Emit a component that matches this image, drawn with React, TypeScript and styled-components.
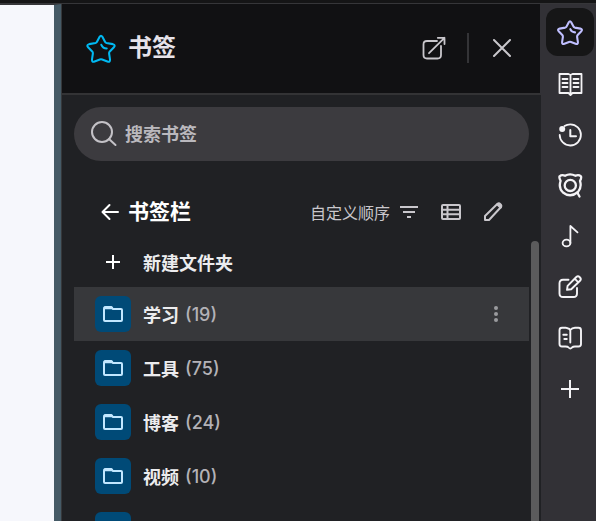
import React from 'react';
import styled, { createGlobalStyle } from 'styled-components';

const GlobalStyle = createGlobalStyle`
  *, *::before, *::after { box-sizing: border-box; }
  body {
    margin: 0;
    overflow: hidden;
    background: #202124;
    color: #ececee;
    font-family: Inter, "Noto Sans CJK SC", sans-serif;
    font-size: 18px;
  }
  button, input { font: inherit; color: inherit; }
`;

const Window = styled.div`
  display: flex;
  flex-direction: column;
  height: 100vh;
`;

const TopStrip = styled.div`
  flex: none;
  height: 4px;
  background: #151516;
  border-bottom: 1px solid #363639;
`;

const Main = styled.div`
  flex: 1;
  min-height: 0;
  display: flex;
`;

const PageEdge = styled.div`
  flex: none;
  width: 61px;
  background: #f6f7fc;
  border-top: 1px solid #363639;
  border-right: 7px solid #455a66;
`;

const Panel = styled.aside`
  flex: 1;
  min-width: 0;
  display: flex;
  flex-direction: column;
  background: #202124;
  border-left: 1px solid #36383b;
`;

const Header = styled.header`
  flex: none;
  display: flex;
  align-items: center;
  height: 91px;
  padding: 0 25px 2px 23px;
  background: #111113;
  border-bottom: 2px solid #333335;
  border-right: 1px solid #323136;
`;

const Title = styled.h1`
  flex: 1;
  margin: 0 0 0 11px;
  font-size: 24px;
  line-height: 32px;
  font-weight: 700;
  color: #e6e3ea;
`;

const Divider = styled.span`
  width: 2px;
  height: 30px;
  margin: 0 20px 0 19px;
  background: #343437;
`;

const IconButton = styled.button<{ $tone?: string }>`
  flex: none;
  display: flex;
  padding: 0;
  border: 0;
  background: none;
  color: ${(p) => p.$tone ?? '#c9c7cc'};
  cursor: pointer;
`;

const Badge = styled.span`
  flex: none;
  color: #00b9f2;
`;

const SearchBox = styled.label`
  flex: none;
  display: flex;
  align-items: center;
  gap: 7px;
  height: 54px;
  margin: 12px 12px 0;
  padding: 0 16px;
  border-radius: 27px;
  background: #3c3b3f;
  color: #c4c2c7;
`;

const SearchInput = styled.input`
  flex: 1;
  min-width: 0;
  padding: 0;
  border: 0;
  outline: 0;
  background: none;
  font-weight: 700;
  &::placeholder { color: #bab8bd; opacity: 1; }
`;

const FolderBar = styled.div`
  flex: none;
  display: flex;
  align-items: center;
  height: 50px;
  margin-top: 26px;
  padding: 0 36px 0 38px;
`;

const FolderTitle = styled.h2`
  flex: 1;
  margin: 0 0 0 8px;
  font-size: 21px;
  line-height: 30px;
  font-weight: 700;
  color: #fff;
`;

const SortButton = styled(IconButton)`
  align-items: center;
  gap: 7px;
  margin-right: 18px;
  font-size: 16px;
`;

const BarActions = styled.div`
  display: flex;
  gap: 18px;
`;

const ScrollArea = styled.div`
  flex: 1;
  min-height: 0;
  display: flex;
  gap: 2px;
  padding: 0 2px 0 12px;
`;

const List = styled.ul`
  flex: 1;
  min-width: 0;
  margin: 0;
  padding: 0;
  overflow: hidden;
  list-style: none;
`;

const Thumb = styled.div`
  width: 8px;
  margin-top: 4px;
  border-radius: 4px 4px 0 0;
  background: #5b5b5c;
`;

const Row = styled.li<{ $active?: boolean; $short?: boolean }>`
  display: flex;
  align-items: center;
  height: ${(p) => (p.$short ? 50 : 54)}px;
  padding: 0 21px;
  background: ${(p) => (p.$active ? '#37383b' : 'transparent')};
`;

const RowButton = styled.button`
  flex: 1;
  min-width: 0;
  display: flex;
  align-items: center;
  padding: 0;
  border: 0;
  background: none;
  text-align: left;
  font-weight: 700;
  cursor: pointer;
`;

const Tile = styled.span<{ $filled?: boolean }>`
  display: flex;
  align-items: center;
  justify-content: center;
  width: 36px;
  height: 36px;
  margin-right: 12px;
  border-radius: 6px;
  background: ${(p) => (p.$filled ? '#004a77' : 'transparent')};
  color: ${(p) => (p.$filled ? '#c2e7ff' : '#fff')};
`;

const Count = styled.span`
  margin-left: 6px;
  font-weight: 500;
  color: #b3b2b7;
`;

const Rail = styled.nav`
  flex: none;
  display: flex;
  flex-direction: column;
  gap: 3px;
  width: 55px;
  padding: 4px 2px 0 5px;
  background: #323136;
`;

const RailButton = styled.button<{ $active?: boolean }>`
  flex: none;
  display: flex;
  align-items: center;
  justify-content: center;
  height: 48px;
  padding: 0;
  border: 0;
  border-radius: 12px;
  background: ${(p) => (p.$active ? '#161617' : 'none')};
  color: ${(p) => (p.$active ? '#c0bfff' : '#f4f3f6')};
  cursor: pointer;
`;

const Svg = styled.svg`
  display: block;
  flex: none;
  fill: none;
  stroke: currentColor;
  stroke-linecap: round;
  stroke-linejoin: round;
`;

type IconProps = { size?: number; box?: number; weight?: number; children: React.ReactNode };

const Icon = ({ size = 28, box = size, weight = 2, children }: IconProps) => (
  <Svg width={size} height={size} viewBox={`0 0 ${box} ${box}`} strokeWidth={weight} aria-hidden="true">
    {children}
  </Svg>
);

const Star = ({ size = 28, weight = 2.1 }) => (
  <Icon size={size} box={28} weight={weight}>
    <path d="M12.8 4.2Q14 2.2 15.2 4.2L17.5 8.6Q17.9 9.4 18.8 9.6L24.3 10.6Q27 11.5 25.3 13.3L21.7 17Q21 17.8 21.1 18.8L21.9 24.2Q22 26.7 19.6 25.8L15 24Q14 23.6 13 24L8.4 25.8Q6 26.7 6.1 24.2L6.9 18.8Q7 17.8 6.3 17L2.7 13.3Q1 11.5 3.7 10.6L9.2 9.6Q10.1 9.4 10.5 8.6Z" />
    <path d="M14.3 11.2Q15.6 14.3 19 14.4" />
  </Icon>
);

const OpenIcon = () => (
  <Icon weight={1.8}>
    <path d="M17 7H7Q3.5 7 3.5 10.5V21Q3.5 24.5 7 24.5H17.5Q21 24.5 21 21V12" />
    <path d="M9 19.2L24.5 3.8M17.8 3.8H24.5V10" />
  </Icon>
);

const CloseIcon = () => (
  <Icon size={26}><path d="M5 5L21 21M21 5L5 21" /></Icon>
);

const SearchIcon = () => (
  <Icon><circle cx="12" cy="12" r="10" /><path d="M19 19L25.5 25" /></Icon>
);

const BackIcon = () => (
  <Icon size={20}><path d="M18 10H3M9.5 3L2.5 10L9.5 17" /></Icon>
);

const SortIcon = () => (
  <Icon size={24}><path strokeLinecap="butt" d="M3 7H21M6 12H18M10 17H14" /></Icon>
);

const TableIcon = () => (
  <Icon size={24}>
    <rect x="3" y="5" width="18" height="14" rx="1" />
    <path strokeLinecap="butt" d="M8.5 5V19M3 9.7H21M3 14.3H21" />
  </Icon>
);

const PencilIcon = () => (
  <Icon size={24}>
    <path d="M4 20V16L16.5 3.8Q18 2.8 19.4 4.2Q21 5.8 19.8 7.2L8 20Z" />
    <path d="M17 4.5L19.5 7" strokeWidth={3} />
  </Icon>
);

const PlusIcon = () => (
  <Icon size={20}><path strokeLinecap="butt" d="M10 3V17M3 10H17" /></Icon>
);

const FolderIcon = () => (
  <Icon size={24}>
    <path d="M3 7Q3 5 5 5H10L12 7H20Q21 7 21 8V18Q21 19 20 19H4Q3 19 3 18Z" />
    <path d="M4 5.8H10.5" strokeWidth={3} />
  </Icon>
);

const DotsIcon = () => (
  <Icon size={24}>
    <g fill="currentColor" stroke="none">
      <circle cx="12" cy="6" r="2" /><circle cx="12" cy="12" r="2" /><circle cx="12" cy="18" r="2" />
    </g>
  </Icon>
);

const ReadingIcon = () => (
  <Icon weight={1.8}>
    <path d="M14.5 6L12.5 5H3.5V24H12.5L14.5 26L16.5 24H25.5V5H16.5ZM14.5 6V25" />
    <path d="M6.5 10H11.5M6.5 14H11.5M6.5 18H11.5M17.5 10H22.5M17.5 14H22.5M17.5 18H22.5" />
  </Icon>
);

const HistoryIcon = () => (
  <Icon weight={1.8}>
    <path d="M8.5 6Q11 4.3 14.3 4.3A10.6 10.6 0 1 1 3.7 15" />
    <path d="M14.3 10V16.2H20" strokeWidth={2} />
    <circle cx="6.2" cy="9" r="3" fill="currentColor" stroke="none" />
  </Icon>
);

const MascotIcon = () => (
  <Icon weight={2.3}>
    <path d="M9 4.8Q14 1.8 19.5 4.8Q22.5 3.3 25 5.3Q25.6 7.3 24 9.8Q26 16.5 22 21Q14.4 27.3 7 21.5Q2.2 17 4.6 9.8Q3 7.3 3.5 5.3Q6 3.3 9 4.8Z" />
    <path d="M21.3 21.5L23.5 25.5" />
    <circle cx="14.3" cy="14.4" r="5.6" />
  </Icon>
);

const MusicIcon = () => (
  <Icon weight={1.8}>
    <ellipse cx="10.5" cy="21" rx="3.9" ry="3.4" />
    <path d="M14.4 21V4L21.5 10.3" />
  </Icon>
);

const ComposeIcon = () => (
  <Icon weight={1.9}>
    <path d="M12.5 6.8H7Q3.5 6.8 3.5 10.3V20.5Q3.5 24 7 24H17.5Q21 24 21 20.5V15" />
    <path d="M11 16.8L11.6 12.8L20.3 4Q22 2.5 23.8 4.2Q25.7 6 24 7.8L15.2 16.3ZM18.7 5.6L22.3 9.3" />
  </Icon>
);

const BookIcon = () => (
  <Icon weight={1.9}>
    <path d="M14.3 18.5V7Q14.3 5 12.3 4.5L9.5 3.7H6Q3.5 3.7 3.5 6.2V20Q3.5 22.5 6 22.5H9.5Q11.8 22.5 12.6 23.5Q14.3 25.5 16 23.5Q17 22.5 19 22.5H22.5Q25 22.5 25 20V6.2Q25 3.7 22.5 3.7H19Q16 3.7 14.3 6" />
    <path d="M7.3 10.8H10.8M8.3 15H10.8" />
  </Icon>
);

const AddIcon = () => (
  <Icon><path strokeLinecap="butt" d="M14 5V23M5 14H23" /></Icon>
);

const folders = [
  { name: '学习', count: 19, active: true },
  { name: '工具', count: 75 },
  { name: '博客', count: 24 },
  { name: '视频', count: 10 },
];

const railItems = [
  { label: '书签', icon: <Star />, active: true },
  { label: '阅读清单', icon: <ReadingIcon /> },
  { label: '历史记录', icon: <HistoryIcon /> },
  { label: '助手', icon: <MascotIcon /> },
  { label: '音乐', icon: <MusicIcon /> },
  { label: '笔记', icon: <ComposeIcon /> },
  { label: '图书', icon: <BookIcon /> },
  { label: '添加', icon: <AddIcon /> },
];

export default function App() {
  return (
    <Window>
      <GlobalStyle />
      <TopStrip />
      <Main>
        <PageEdge />
        <Panel>
          <Header>
            <Badge><Star size={32} weight={1.8} /></Badge>
            <Title>书签</Title>
            <IconButton aria-label="在标签页中打开"><OpenIcon /></IconButton>
            <Divider />
            <IconButton aria-label="关闭"><CloseIcon /></IconButton>
          </Header>
          <SearchBox>
            <SearchIcon />
            <SearchInput type="text" placeholder="搜索书签" aria-label="搜索书签" />
          </SearchBox>
          <FolderBar>
            <IconButton $tone="#fff" aria-label="返回"><BackIcon /></IconButton>
            <FolderTitle>书签栏</FolderTitle>
            <SortButton>自定义顺序<SortIcon /></SortButton>
            <BarActions>
              <IconButton aria-label="列表视图"><TableIcon /></IconButton>
              <IconButton aria-label="编辑"><PencilIcon /></IconButton>
            </BarActions>
          </FolderBar>
          <ScrollArea>
            <List>
              <Row $short>
                <RowButton><Tile><PlusIcon /></Tile>新建文件夹</RowButton>
              </Row>
              {folders.map((f) => (
                <Row key={f.name} $active={f.active}>
                  <RowButton>
                    <Tile $filled><FolderIcon /></Tile>
                    {f.name}
                    <Count>({f.count})</Count>
                  </RowButton>
                  {f.active && <IconButton $tone="#9a9b9e" aria-label="更多操作"><DotsIcon /></IconButton>}
                </Row>
              ))}
              <Row>
                <RowButton aria-label="文件夹"><Tile $filled><FolderIcon /></Tile></RowButton>
              </Row>
            </List>
            <Thumb />
          </ScrollArea>
        </Panel>
        <Rail>
          {railItems.map((r) => (
            <RailButton key={r.label} $active={r.active} aria-label={r.label}>{r.icon}</RailButton>
          ))}
        </Rail>
      </Main>
    </Window>
  );
}
